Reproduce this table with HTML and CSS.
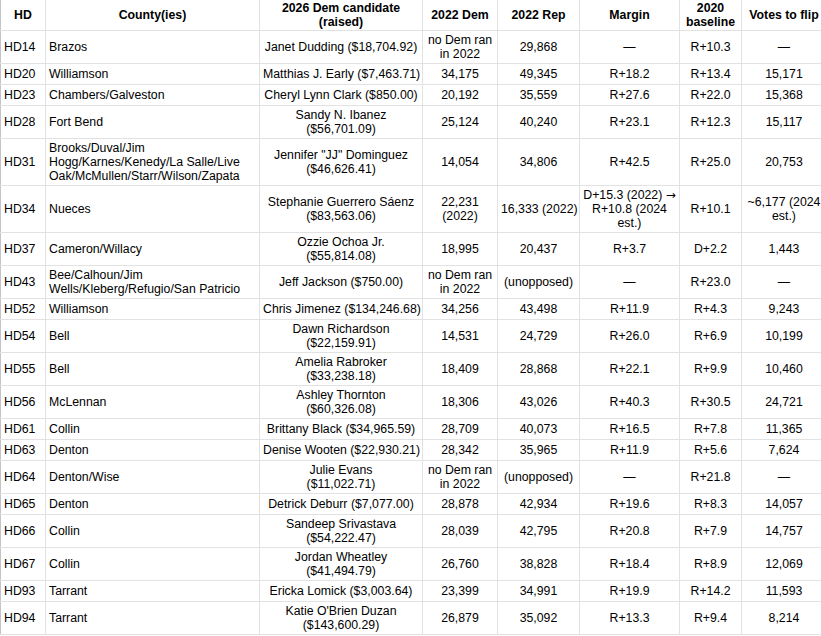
FILE: index.html
```html
<!DOCTYPE html>
<html lang="en">
<head>
<meta charset="utf-8">
<title>2026 Texas House targets</title>
<link rel="stylesheet" href="styles.css">
</head>
<body>
<div class="viewport">
<table class="sheet">
<colgroup>
<col class="c-hd"><col class="c-county"><col class="c-cand"><col class="c-dem"><col class="c-rep"><col class="c-margin"><col class="c-base"><col class="c-flip">
</colgroup>
<thead>
<tr>
<th>HD</th><th>County(ies)</th><th>2026 Dem candidate<br>(raised)</th><th>2022 Dem</th><th>2022 Rep</th><th>Margin</th><th>2020<br>baseline</th><th>Votes to flip</th>
</tr>
</thead>
<tbody>
<tr><td class="l">HD14</td><td class="l">Brazos</td><td>Janet Dudding ($18,704.92)</td><td>no Dem ran<br>in 2022</td><td>29,868</td><td>—</td><td>R+10.3</td><td>—</td></tr>
<tr><td class="l">HD20</td><td class="l">Williamson</td><td>Matthias J. Early ($7,463.71)</td><td>34,175</td><td>49,345</td><td>R+18.2</td><td>R+13.4</td><td>15,171</td></tr>
<tr><td class="l">HD23</td><td class="l">Chambers/Galveston</td><td>Cheryl Lynn Clark ($850.00)</td><td>20,192</td><td>35,559</td><td>R+27.6</td><td>R+22.0</td><td>15,368</td></tr>
<tr><td class="l">HD28</td><td class="l">Fort Bend</td><td>Sandy N. Ibanez<br>($56,701.09)</td><td>25,124</td><td>40,240</td><td>R+23.1</td><td>R+12.3</td><td>15,117</td></tr>
<tr><td class="l">HD31</td><td class="l">Brooks/Duval/Jim<br>Hogg/Karnes/Kenedy/La Salle/Live<br>Oak/McMullen/Starr/Wilson/Zapata</td><td>Jennifer "JJ" Dominguez<br>($46,626.41)</td><td>14,054</td><td>34,806</td><td>R+42.5</td><td>R+25.0</td><td>20,753</td></tr>
<tr><td class="l">HD34</td><td class="l">Nueces</td><td>Stephanie Guerrero Sáenz<br>($83,563.06)</td><td>22,231<br>(2022)</td><td>16,333 (2022)</td><td>D+15.3 (2022) <span class="arrow">→</span><br>R+10.8 (2024<br>est.)</td><td>R+10.1</td><td>~6,177 (2024<br>est.)</td></tr>
<tr><td class="l">HD37</td><td class="l">Cameron/Willacy</td><td>Ozzie Ochoa Jr.<br>($55,814.08)</td><td>18,995</td><td>20,437</td><td>R+3.7</td><td>D+2.2</td><td>1,443</td></tr>
<tr><td class="l">HD43</td><td class="l">Bee/Calhoun/Jim<br>Wells/Kleberg/Refugio/San Patricio</td><td>Jeff Jackson ($750.00)</td><td>no Dem ran<br>in 2022</td><td>(unopposed)</td><td>—</td><td>R+23.0</td><td>—</td></tr>
<tr><td class="l">HD52</td><td class="l">Williamson</td><td>Chris Jimenez ($134,246.68)</td><td>34,256</td><td>43,498</td><td>R+11.9</td><td>R+4.3</td><td>9,243</td></tr>
<tr><td class="l">HD54</td><td class="l">Bell</td><td>Dawn Richardson<br>($22,159.91)</td><td>14,531</td><td>24,729</td><td>R+26.0</td><td>R+6.9</td><td>10,199</td></tr>
<tr><td class="l">HD55</td><td class="l">Bell</td><td>Amelia Rabroker<br>($33,238.18)</td><td>18,409</td><td>28,868</td><td>R+22.1</td><td>R+9.9</td><td>10,460</td></tr>
<tr><td class="l">HD56</td><td class="l">McLennan</td><td>Ashley Thornton<br>($60,326.08)</td><td>18,306</td><td>43,026</td><td>R+40.3</td><td>R+30.5</td><td>24,721</td></tr>
<tr><td class="l">HD61</td><td class="l">Collin</td><td>Brittany Black ($34,965.59)</td><td>28,709</td><td>40,073</td><td>R+16.5</td><td>R+7.8</td><td>11,365</td></tr>
<tr><td class="l">HD63</td><td class="l">Denton</td><td>Denise Wooten ($22,930.21)</td><td>28,342</td><td>35,965</td><td>R+11.9</td><td>R+5.6</td><td>7,624</td></tr>
<tr><td class="l">HD64</td><td class="l">Denton/Wise</td><td>Julie Evans<br>($11,022.71)</td><td>no Dem ran<br>in 2022</td><td>(unopposed)</td><td>—</td><td>R+21.8</td><td>—</td></tr>
<tr><td class="l">HD65</td><td class="l">Denton</td><td>Detrick Deburr ($7,077.00)</td><td>28,878</td><td>42,934</td><td>R+19.6</td><td>R+8.3</td><td>14,057</td></tr>
<tr><td class="l">HD66</td><td class="l">Collin</td><td>Sandeep Srivastava<br>($54,222.47)</td><td>28,039</td><td>42,795</td><td>R+20.8</td><td>R+7.9</td><td>14,757</td></tr>
<tr><td class="l">HD67</td><td class="l">Collin</td><td>Jordan Wheatley<br>($41,494.79)</td><td>26,760</td><td>38,828</td><td>R+18.4</td><td>R+8.9</td><td>12,069</td></tr>
<tr><td class="l">HD93</td><td class="l">Tarrant</td><td>Ericka Lomick ($3,003.64)</td><td>23,399</td><td>34,991</td><td>R+19.9</td><td>R+14.2</td><td>11,593</td></tr>
<tr><td class="l">HD94</td><td class="l">Tarrant</td><td>Katie O'Brien Duzan<br>($143,600.29)</td><td>26,879</td><td>35,092</td><td>R+13.3</td><td>R+9.4</td><td>8,214</td></tr>
</tbody>
</table>
</div>
</body>
</html>
```

FILE: styles.css
```css
html, body {
  margin: 0;
  padding: 0;
  background: #ffffff;
}

.viewport {
  width: 821px;
  height: 636px;
  overflow: hidden;
}

.sheet {
  border-collapse: collapse;
  table-layout: fixed;
  width: 826px;
  font-family: "Liberation Sans", Arial, sans-serif;
  font-size: 12.3px;
  color: #000000;
  border-left: 1px solid #c4c4c4;
}

.c-hd { width: 45px; }
.c-county { width: 214px; }
.c-cand { width: 163px; }
.c-dem { width: 75px; }
.c-rep { width: 82px; }
.c-margin { width: 100px; }
.c-base { width: 62px; }
.c-flip { width: 85px; }

.sheet th,
.sheet td {
  border: 1px solid #e2e2e2;
  text-align: center;
  vertical-align: middle;
  white-space: nowrap;
  overflow: hidden;
  line-height: 14px;
}

.sheet th {
  font-weight: bold;
  padding: 0 3px;
  border-top: none;
}

.sheet thead tr {
  height: 30px;
}

.sheet td {
  padding: 2px 3px;
}

.sheet tbody tr {
  height: 21px;
}

.sheet th:first-child,
.sheet td:first-child {
  border-left: 1px solid #c4c4c4;
}

.sheet td.l {
  text-align: left;
}

.arrow {
  font-family: "DejaVu Sans", sans-serif;
  font-size: 12px;
}
```
